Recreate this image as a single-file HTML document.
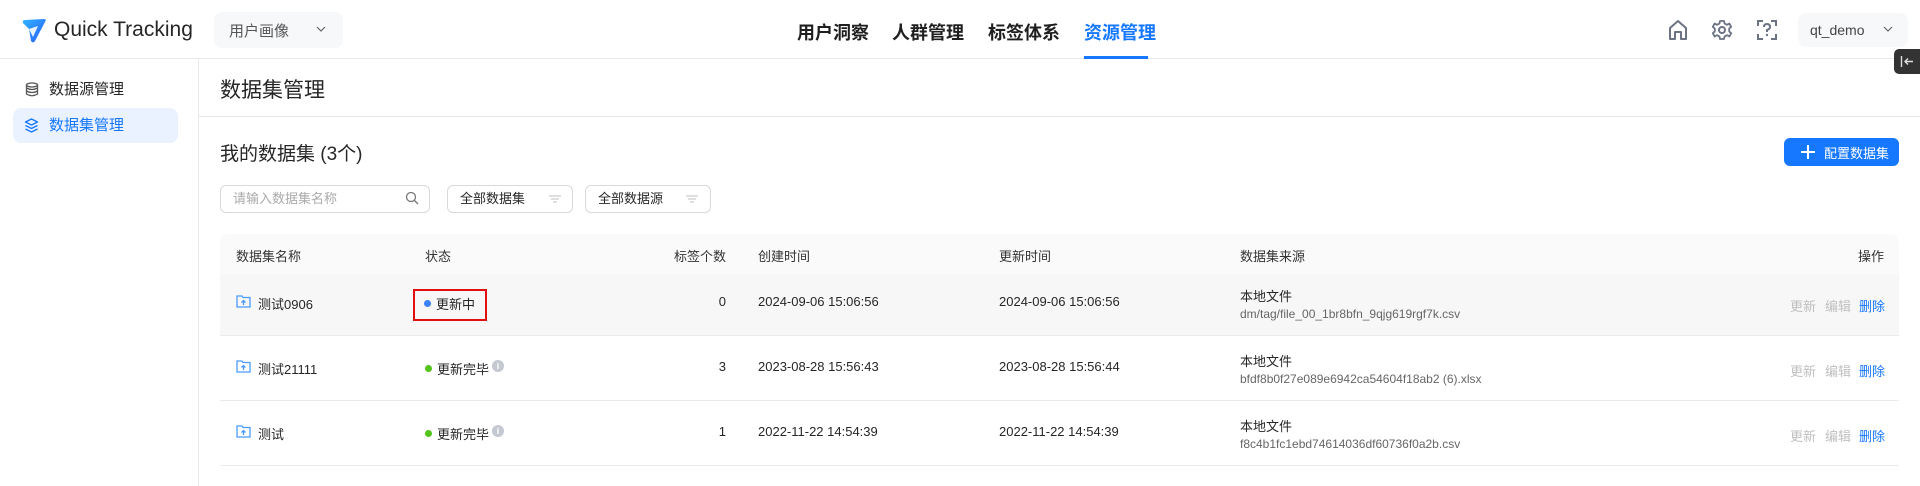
<!DOCTYPE html>
<html><head><meta charset="utf-8"><style>
*{box-sizing:border-box;margin:0;padding:0}
body{width:1920px;height:486px;overflow:hidden;background:#fff;font-family:"Liberation Sans","Noto Sans CJK SC",sans-serif;color:#1f1f1f;position:relative}
.abs{position:absolute;white-space:nowrap}
.hdr{left:0;top:0;width:1920px;height:59px;border-bottom:1px solid #e8e8e8}
.nav{top:19px;font-size:18px;font-weight:bold;color:#1f1f1f}
.dd{background:#f7f8fa;border-radius:8px}
.side{left:0;top:59px;width:199px;height:427px;border-right:1px solid #e8e8e8}
.mi{left:13px;width:165px;height:35px;border-radius:8px;font-size:15px;line-height:35px;padding-left:36px}
.th{font-size:13px;color:#333;top:246px}
.cell{font-size:13px;color:#262626;position:absolute;white-space:nowrap}
.rowline{left:220px;width:1679px;height:1px;background:#ebebeb}
.sub{font-size:12px;color:#666}
.op{font-size:13px;color:#bfbfbf}
.del{font-size:13px;color:#1677ff}
.sel{border:1px solid #d9d9d9;border-radius:6px;height:28px;top:185px;font-size:13px;line-height:26px;padding-left:12px}
</style></head><body>
<div class="abs hdr"></div>
<svg class="abs" style="left:20px;top:17px" width="28" height="28" viewBox="0 0 28 28"><defs><linearGradient id="g" x1="0" y1="0" x2="1" y2="1"><stop offset="0" stop-color="#2fb4ff"/><stop offset="1" stop-color="#2b5cff"/></linearGradient></defs><path d="M3 6 Q2 3 5 3 L24 2 Q27 2 25 5 L15 24 Q13 27 11 24 L9 12 Z" fill="url(#g)"/><path d="M9 12 L18 9 L13 20 Z" fill="#fff" opacity=".9"/></svg>
<div class="abs" style="left:54px;top:18px;font-size:21px;color:#262626">Quick Tracking</div>
<div class="abs dd" style="left:214px;top:12px;width:129px;height:36px"></div>
<div class="abs" style="left:229px;top:20px;font-size:15px;color:#555">用户画像</div>
<svg class="abs" style="left:316px;top:25px" width="10" height="8"><path d="M1 2 L5 6 L9 2" fill="none" stroke="#666" stroke-width="1.2"/></svg>
<div class="abs nav" style="left:797px">用户洞察</div>
<div class="abs nav" style="left:892px">人群管理</div>
<div class="abs nav" style="left:988px">标签体系</div>
<div class="abs nav" style="left:1084px;color:#1677ff">资源管理</div>
<div class="abs" style="left:1084px;top:56px;width:64px;height:3px;background:#1677ff"></div>
<svg class="abs" style="left:1667px;top:19px" width="22" height="22" viewBox="0 0 22 22"><path d="M3 20 V9 L11 2 L19 9 V20 H14 V13 H8 V20 Z" fill="none" stroke="#6b7385" stroke-width="2" stroke-linejoin="round"/></svg>
<svg class="abs" style="left:1711px;top:19px" width="22" height="22" viewBox="0 0 22 22"><circle cx="11" cy="11" r="3" fill="none" stroke="#6b7385" stroke-width="2"/><path d="M9 2 H13 L13.6 4.6 L16 5.8 L18.4 4.6 L20.2 7.8 L18.2 9.6 V12.4 L20.2 14.2 L18.4 17.4 L16 16.2 L13.6 17.4 L13 20 H9 L8.4 17.4 L6 16.2 L3.6 17.4 L1.8 14.2 L3.8 12.4 V9.6 L1.8 7.8 L3.6 4.6 L6 5.8 L8.4 4.6 Z" fill="none" stroke="#6b7385" stroke-width="1.8" stroke-linejoin="round"/></svg>
<svg class="abs" style="left:1756px;top:19px" width="22" height="22" viewBox="0 0 22 22"><path d="M2 7 V2 H7 M15 2 H20 V7 M20 15 V20 H15 M7 20 H2 V15" fill="none" stroke="#6b7385" stroke-width="2"/><path d="M8 8 Q8 5 11 5 Q14 5 14 8 Q14 10 11 11 V13" fill="none" stroke="#6b7385" stroke-width="2"/><circle cx="11" cy="16" r="1.2" fill="#6b7385"/></svg>
<div class="abs dd" style="left:1798px;top:13px;width:110px;height:34px"></div>
<div class="abs" style="left:1810px;top:22px;font-size:14px;color:#444">qt_demo</div>
<svg class="abs" style="left:1883px;top:25px" width="10" height="8"><path d="M1 2 L5 6 L9 2" fill="none" stroke="#666" stroke-width="1.2"/></svg>
<div class="abs" style="left:1894px;top:49px;width:26px;height:25px;background:#333;border-radius:5px 0 0 5px"></div>
<svg class="abs" style="left:1900px;top:55px" width="14" height="13"><path d="M1.5 1 V12 M13 6.5 H5 M8 3.5 L5 6.5 L8 9.5" fill="none" stroke="#ddd" stroke-width="1.4"/></svg>

<div class="abs side"></div>
<svg class="abs" style="left:25px;top:82px" width="14" height="15" viewBox="0 0 14 15"><ellipse cx="7" cy="3" rx="5.5" ry="2" fill="none" stroke="#555" stroke-width="1.3"/><path d="M1.5 3 V12 Q7 15.5 12.5 12 V3 M1.5 6 Q7 9 12.5 6 M1.5 9 Q7 12 12.5 9" fill="none" stroke="#555" stroke-width="1.3"/></svg>
<div class="abs mi" style="top:72px;color:#262626">数据源管理</div>
<div class="abs mi" style="top:108px;background:#eaf2ff;color:#1677ff">数据集管理</div>
<svg class="abs" style="left:24px;top:118px" width="15" height="15" viewBox="0 0 15 15"><path d="M7.5 1 L13.5 4 L7.5 7 L1.5 4 Z M1.5 7.5 L7.5 10.5 L13.5 7.5 M1.5 11 L7.5 14 L13.5 11" fill="none" stroke="#1677ff" stroke-width="1.3" stroke-linejoin="round"/></svg>

<div class="abs" style="left:220px;top:74px;font-size:21px;color:#262626">数据集管理</div>
<div class="abs" style="left:199px;top:116px;width:1721px;height:1px;background:#e8e8e8"></div>
<div class="abs" style="left:220px;top:139px;font-size:19px;color:#262626">我的数据集 (3个)</div>
<div class="abs" style="left:1784px;top:138px;width:115px;height:28px;background:#1677ff;border-radius:6px"></div>
<svg class="abs" style="left:1800px;top:144px" width="16" height="16"><path d="M8 1 V15 M1 8 H15" stroke="#fff" stroke-width="2"/></svg>
<div class="abs" style="left:1824px;top:143px;font-size:13px;color:#fff">配置数据集</div>

<div class="abs sel" style="left:220px;width:210px;color:#aaa">请输入数据集名称</div>
<svg class="abs" style="left:405px;top:191px" width="14" height="14"><circle cx="6" cy="6" r="4.5" fill="none" stroke="#777" stroke-width="1.3"/><path d="M9.5 9.5 L13 13" stroke="#777" stroke-width="1.3"/></svg>
<div class="abs sel" style="left:447px;width:126px;color:#262626">全部数据集</div>
<div class="abs sel" style="left:585px;width:126px;color:#262626">全部数据源</div>
<svg class="abs" style="left:549px;top:195px" width="12" height="8"><path d="M0 1 H12 M2 4 H10 M4 7 H8" stroke="#ccc" stroke-width="1.3"/></svg>
<svg class="abs" style="left:686px;top:195px" width="12" height="8"><path d="M0 1 H12 M2 4 H10 M4 7 H8" stroke="#ccc" stroke-width="1.3"/></svg>

<div class="abs" style="left:220px;top:234px;width:1679px;height:101px;background:#fafafa;border-radius:8px 8px 0 0"></div>
<div class="abs" style="left:220px;top:274px;width:1679px;height:61px;background:#f7f7f7"></div>
<div class="abs th" style="left:236px">数据集名称</div>
<div class="abs th" style="left:425px">状态</div>
<div class="abs th" style="left:666px;width:60px;text-align:right">标签个数</div>
<div class="abs th" style="left:758px">创建时间</div>
<div class="abs th" style="left:999px">更新时间</div>
<div class="abs th" style="left:1240px">数据集来源</div>
<div class="abs th" style="left:1858px">操作</div>

<div class="abs rowline" style="top:335px"></div>
<div class="abs rowline" style="top:400px"></div>
<div class="abs rowline" style="top:465px"></div>

<svg class="abs" style="left:236px;top:294px" width="15" height="14" viewBox="0 0 15 14"><path d="M1 2 H6 L7 3.5 H14 V13 H1 Z" fill="none" stroke="#4b9bff" stroke-width="1.3"/><path d="M7.5 11 V6.5 M5.5 8.5 L7.5 6.5 L9.5 8.5" fill="none" stroke="#4b9bff" stroke-width="1.3"/></svg>
<div class="cell" style="left:258px;top:294px">测试0906</div>
<div class="abs" style="left:413px;top:289px;width:74px;height:32px;border:2px solid #e01010"></div>
<div class="abs" style="left:424px;top:300px;width:7px;height:7px;border-radius:50%;background:#3b82f6"></div>
<div class="cell" style="left:436px;top:294px">更新中</div>
<div class="cell" style="left:700px;width:26px;text-align:right;top:294px">0</div>
<div class="cell" style="left:758px;top:294px">2024-09-06 15:06:56</div>
<div class="cell" style="left:999px;top:294px">2024-09-06 15:06:56</div>
<div class="cell" style="left:1240px;top:286px">本地文件</div>
<div class="cell sub" style="left:1240px;top:307px">dm/tag/file_00_1br8bfn_9qjg619rgf7k.csv</div>
<div class="cell op" style="left:1790px;top:296px">更新</div><div class="cell op" style="left:1825px;top:296px">编辑</div><div class="cell del" style="left:1859px;top:296px">删除</div>

<svg class="abs" style="left:236px;top:359px" width="15" height="14" viewBox="0 0 15 14"><path d="M1 2 H6 L7 3.5 H14 V13 H1 Z" fill="none" stroke="#4b9bff" stroke-width="1.3"/><path d="M7.5 11 V6.5 M5.5 8.5 L7.5 6.5 L9.5 8.5" fill="none" stroke="#4b9bff" stroke-width="1.3"/></svg>
<div class="cell" style="left:258px;top:359px">测试21111</div>
<div class="abs" style="left:425px;top:365px;width:7px;height:7px;border-radius:50%;background:#52c41a"></div>
<div class="cell" style="left:437px;top:359px">更新完毕</div>
<div class="abs" style="left:492px;top:360px;width:12px;height:12px;border-radius:50%;background:#c4c8d0;color:#fff;font-size:9px;text-align:center;line-height:12px;font-weight:bold">i</div>
<div class="cell" style="left:700px;width:26px;text-align:right;top:359px">3</div>
<div class="cell" style="left:758px;top:359px">2023-08-28 15:56:43</div>
<div class="cell" style="left:999px;top:359px">2023-08-28 15:56:44</div>
<div class="cell" style="left:1240px;top:351px">本地文件</div>
<div class="cell sub" style="left:1240px;top:372px">bfdf8b0f27e089e6942ca54604f18ab2 (6).xlsx</div>
<div class="cell op" style="left:1790px;top:361px">更新</div><div class="cell op" style="left:1825px;top:361px">编辑</div><div class="cell del" style="left:1859px;top:361px">删除</div>

<svg class="abs" style="left:236px;top:424px" width="15" height="14" viewBox="0 0 15 14"><path d="M1 2 H6 L7 3.5 H14 V13 H1 Z" fill="none" stroke="#4b9bff" stroke-width="1.3"/><path d="M7.5 11 V6.5 M5.5 8.5 L7.5 6.5 L9.5 8.5" fill="none" stroke="#4b9bff" stroke-width="1.3"/></svg>
<div class="cell" style="left:258px;top:424px">测试</div>
<div class="abs" style="left:425px;top:430px;width:7px;height:7px;border-radius:50%;background:#52c41a"></div>
<div class="cell" style="left:437px;top:424px">更新完毕</div>
<div class="abs" style="left:492px;top:425px;width:12px;height:12px;border-radius:50%;background:#c4c8d0;color:#fff;font-size:9px;text-align:center;line-height:12px;font-weight:bold">i</div>
<div class="cell" style="left:700px;width:26px;text-align:right;top:424px">1</div>
<div class="cell" style="left:758px;top:424px">2022-11-22 14:54:39</div>
<div class="cell" style="left:999px;top:424px">2022-11-22 14:54:39</div>
<div class="cell" style="left:1240px;top:416px">本地文件</div>
<div class="cell sub" style="left:1240px;top:437px">f8c4b1fc1ebd74614036df60736f0a2b.csv</div>
<div class="cell op" style="left:1790px;top:426px">更新</div><div class="cell op" style="left:1825px;top:426px">编辑</div><div class="cell del" style="left:1859px;top:426px">删除</div>
</body></html>
